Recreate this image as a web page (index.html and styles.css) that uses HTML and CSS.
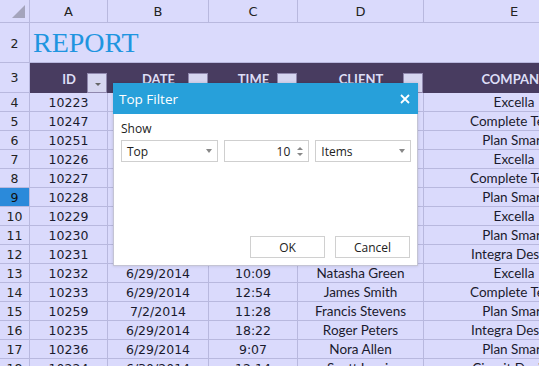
FILE: index.html
```html
<!DOCTYPE html>
<html>
<head>
<meta charset="utf-8">
<link rel="stylesheet" href="styles.css">
</head>
<body>
<div class="sheet">
  <div class="row colhead">
    <div class="rh corner"><span class="tri"></span></div>
    <div class="c ca">A</div><div class="c cb">B</div><div class="c cc">C</div><div class="c cd">D</div><div class="c ce">E</div>
  </div>
  <div class="row r2">
    <div class="rh">2</div>
    <div class="title">REPORT</div>
  </div>
  <div class="row r3">
    <div class="rh">3</div>
    <div class="hc ca">ID<span class="fb"></span></div>
    <div class="hc cb">DATE<span class="fb"></span></div>
    <div class="hc cc">TIME<span class="fb"></span></div>
    <div class="hc cd">CLIENT<span class="fb"></span></div>
    <div class="hc ce">COMPANY<span class="fb"></span></div>
  </div>
  <div class="row dr"><div class="rh">4</div><div class="c ca n">10223</div><div class="c cb n"></div><div class="c cc n"></div><div class="c cd t"></div><div class="c ce t">Excella</div></div>
  <div class="row dr"><div class="rh">5</div><div class="c ca n">10247</div><div class="c cb n"></div><div class="c cc n"></div><div class="c cd t"></div><div class="c ce t">Complete Tech</div></div>
  <div class="row dr"><div class="rh">6</div><div class="c ca n">10251</div><div class="c cb n"></div><div class="c cc n"></div><div class="c cd t"></div><div class="c ce t">Plan Smart</div></div>
  <div class="row dr"><div class="rh">7</div><div class="c ca n">10226</div><div class="c cb n"></div><div class="c cc n"></div><div class="c cd t"></div><div class="c ce t">Excella</div></div>
  <div class="row dr"><div class="rh">8</div><div class="c ca n">10227</div><div class="c cb n"></div><div class="c cc n"></div><div class="c cd t"></div><div class="c ce t">Complete Tech</div></div>
  <div class="row dr"><div class="rh sel">9</div><div class="c ca n">10228</div><div class="c cb n"></div><div class="c cc n"></div><div class="c cd t"></div><div class="c ce t">Plan Smart</div></div>
  <div class="row dr"><div class="rh">10</div><div class="c ca n">10229</div><div class="c cb n"></div><div class="c cc n"></div><div class="c cd t"></div><div class="c ce t">Excella</div></div>
  <div class="row dr"><div class="rh">11</div><div class="c ca n">10230</div><div class="c cb n"></div><div class="c cc n"></div><div class="c cd t"></div><div class="c ce t">Plan Smart</div></div>
  <div class="row dr"><div class="rh">12</div><div class="c ca n">10231</div><div class="c cb n"></div><div class="c cc n"></div><div class="c cd t"></div><div class="c ce t">Integra Design</div></div>
  <div class="row dr"><div class="rh">13</div><div class="c ca n">10232</div><div class="c cb n">6/29/2014</div><div class="c cc n">10:09</div><div class="c cd t">Natasha Green</div><div class="c ce t">Excella</div></div>
  <div class="row dr"><div class="rh">14</div><div class="c ca n">10233</div><div class="c cb n">6/29/2014</div><div class="c cc n">12:54</div><div class="c cd t">James Smith</div><div class="c ce t">Complete Tech</div></div>
  <div class="row dr"><div class="rh">15</div><div class="c ca n">10259</div><div class="c cb n">7/2/2014</div><div class="c cc n">11:28</div><div class="c cd t">Francis Stevens</div><div class="c ce t">Plan Smart</div></div>
  <div class="row dr"><div class="rh">16</div><div class="c ca n">10235</div><div class="c cb n">6/29/2014</div><div class="c cc n">18:22</div><div class="c cd t">Roger Peters</div><div class="c ce t">Integra Design</div></div>
  <div class="row dr"><div class="rh">17</div><div class="c ca n">10236</div><div class="c cb n">6/29/2014</div><div class="c cc n">9:07</div><div class="c cd t">Nora Allen</div><div class="c ce t">Plan Smart</div></div>
  <div class="row dr"><div class="rh">18</div><div class="c ca n">10224</div><div class="c cb n">6/30/2014</div><div class="c cc n">12:14</div><div class="c cd t">Scott Lewis</div><div class="c ce t">Circuit Design</div></div>
</div>

<div class="dialog">
  <div class="dtitle">
    <span>Top Filter</span>
    <svg class="close" width="10" height="10" viewBox="0 0 10 10"><path d="M1 1L9 9M9 1L1 9" stroke="#fff" stroke-width="1.8"/></svg>
  </div>
  <div class="dbody">
    <div class="lbl">Show</div>
    <div class="controls">
      <div class="sel1 combo"><span>Top</span><span class="arr"></span></div>
      <div class="spin"><span class="val">10</span><span class="sarr"><span class="up"></span><span class="dn"></span></span></div>
      <div class="sel2 combo"><span>Items</span><span class="arr"></span></div>
    </div>
    <div class="btns">
      <div class="btn">OK</div>
      <div class="btn">Cancel</div>
    </div>
  </div>
</div>
</body>
</html>
```
FILE: styles.css
```css
* { box-sizing: border-box; }
html, body { margin: 0; padding: 0; }
body {
  width: 539px; height: 366px; overflow: hidden;
  background: #dadafc;
  font-family: "DejaVu Sans", sans-serif;
  position: relative;
}
.sheet { width: 620px; }
.row { display: flex; }
.rh {
  width: 30px; flex: none;
  border-right: 1px solid #b8b8de;
  border-bottom: 1px solid #b8b8de;
  font-size: 12.5px; color: #222;
  display: flex; align-items: flex-end; justify-content: center;
  padding-bottom: 1px;
}
.rh.sel { background: #2b8ada; color: #111; }
.c {
  flex: none;
  border-right: 1px solid #b8b8de;
  border-bottom: 1px solid #b8b8de;
  display: flex; align-items: flex-end; justify-content: center;
  white-space: nowrap; overflow: hidden;
  color: #1a1a2e;
}
.ca { width: 78px; }
.cb { width: 101px; }
.cc { width: 89px; }
.cd { width: 126px; }
.ce { width: 181px; }

.colhead { height: 23px; }
.colhead .c { font-size: 13px; align-items: center; padding-top: 1px; color: #222; }
.colhead .rh { align-items: center; }
.corner { position: relative; }
.tri {
  position: absolute; left: 12px; top: 5px;
  width: 0; height: 0;
  border-left: 13px solid transparent;
  border-bottom: 13px solid #a4a4bc;
}

.r2 { height: 40px; }
.r2 .rh { align-items: center; padding-bottom: 0; padding-top: 2px; }
.title {
  font-family: "Liberation Serif", serif;
  font-size: 28px; color: #1f95e0;
  padding-left: 3px; padding-top: 5px;
  line-height: 30px;
  border-bottom: 1px solid #b8b8de;
  flex: 1;
}

.r3 { height: 30px; }
.r3 .rh { align-items: center; padding-bottom: 0; }
.hc {
  flex: none; height: 30px;
  background: #483c60;
  color: #dedef6;
  font-family: Lato, sans-serif; font-weight: bold; font-size: 13px;
  display: flex; align-items: center; justify-content: center;
  position: relative;
  padding-top: 1px;
}
.fb {
  position: absolute; right: 1px; bottom: 0;
  width: 20px; height: 20px;
  background: #d6d6f0;
  border: 1px solid #9088ae;
}
.fb::after {
  content: ""; position: absolute; left: 7px; top: 9px;
  border-left: 3px solid transparent; border-right: 3px solid transparent;
  border-top: 3px solid #666;
}

.dr { height: 19px; }
.n { font-size: 12.5px; padding-bottom: 1px; }
.t { font-family: Lato, sans-serif; font-size: 13.5px; padding-bottom: 1px; line-height: 16px; }

.dialog {
  position: absolute; left: 113px; top: 83px;
  width: 305px; height: 183px;
  background: #fff;
  border: 1px solid #c4c4d4;
  border-top: none;
  box-shadow: 0 0 3px rgba(0,0,0,0.15);
  font-family: "Open Sans", sans-serif;
  color: #222;
  display: flex; flex-direction: column;
}
.dtitle {
  height: 31px; background: #27a0da;
  color: #fff; font-size: 13.5px;
  display: flex; align-items: center; justify-content: space-between;
  padding: 0 8px 0 6px;
  margin: 0 -1px;
}
.dbody { flex: 1; padding: 6px 6px 0 7px; display: flex; flex-direction: column; }
.lbl { font-size: 12px; height: 18px; line-height: 18px; }
.controls { display: flex; gap: 6px; margin-top: 2px; }
.combo, .spin {
  height: 22px; border: 1px solid #cfcfcf;
  display: flex; align-items: center;
  font-size: 12px;
}
.combo { justify-content: space-between; padding: 0 5px 0 5px; }
.sel1 { width: 97px; }
.sel2 { width: 96px; }
.spin { width: 86px; justify-content: flex-end; padding-right: 4px; }
.val { margin-right: 6px; }
.arr {
  width: 0; height: 0;
  border-left: 3.5px solid transparent; border-right: 3.5px solid transparent;
  border-top: 4px solid #888;
}
.sarr { display: flex; flex-direction: column; gap: 3px; width: 8px; align-items: center; }
.up { border-left: 3px solid transparent; border-right: 3px solid transparent; border-bottom: 3px solid #888; }
.dn { border-left: 3px solid transparent; border-right: 3px solid transparent; border-top: 3px solid #888; }
.btns { display: flex; justify-content: flex-end; gap: 10px; margin-top: 74px; padding-right: 1px; }
.btn {
  width: 75px; height: 22px;
  border: 1px solid #d0d0d0;
  display: flex; align-items: center; justify-content: center;
  font-size: 12px;
}
```
